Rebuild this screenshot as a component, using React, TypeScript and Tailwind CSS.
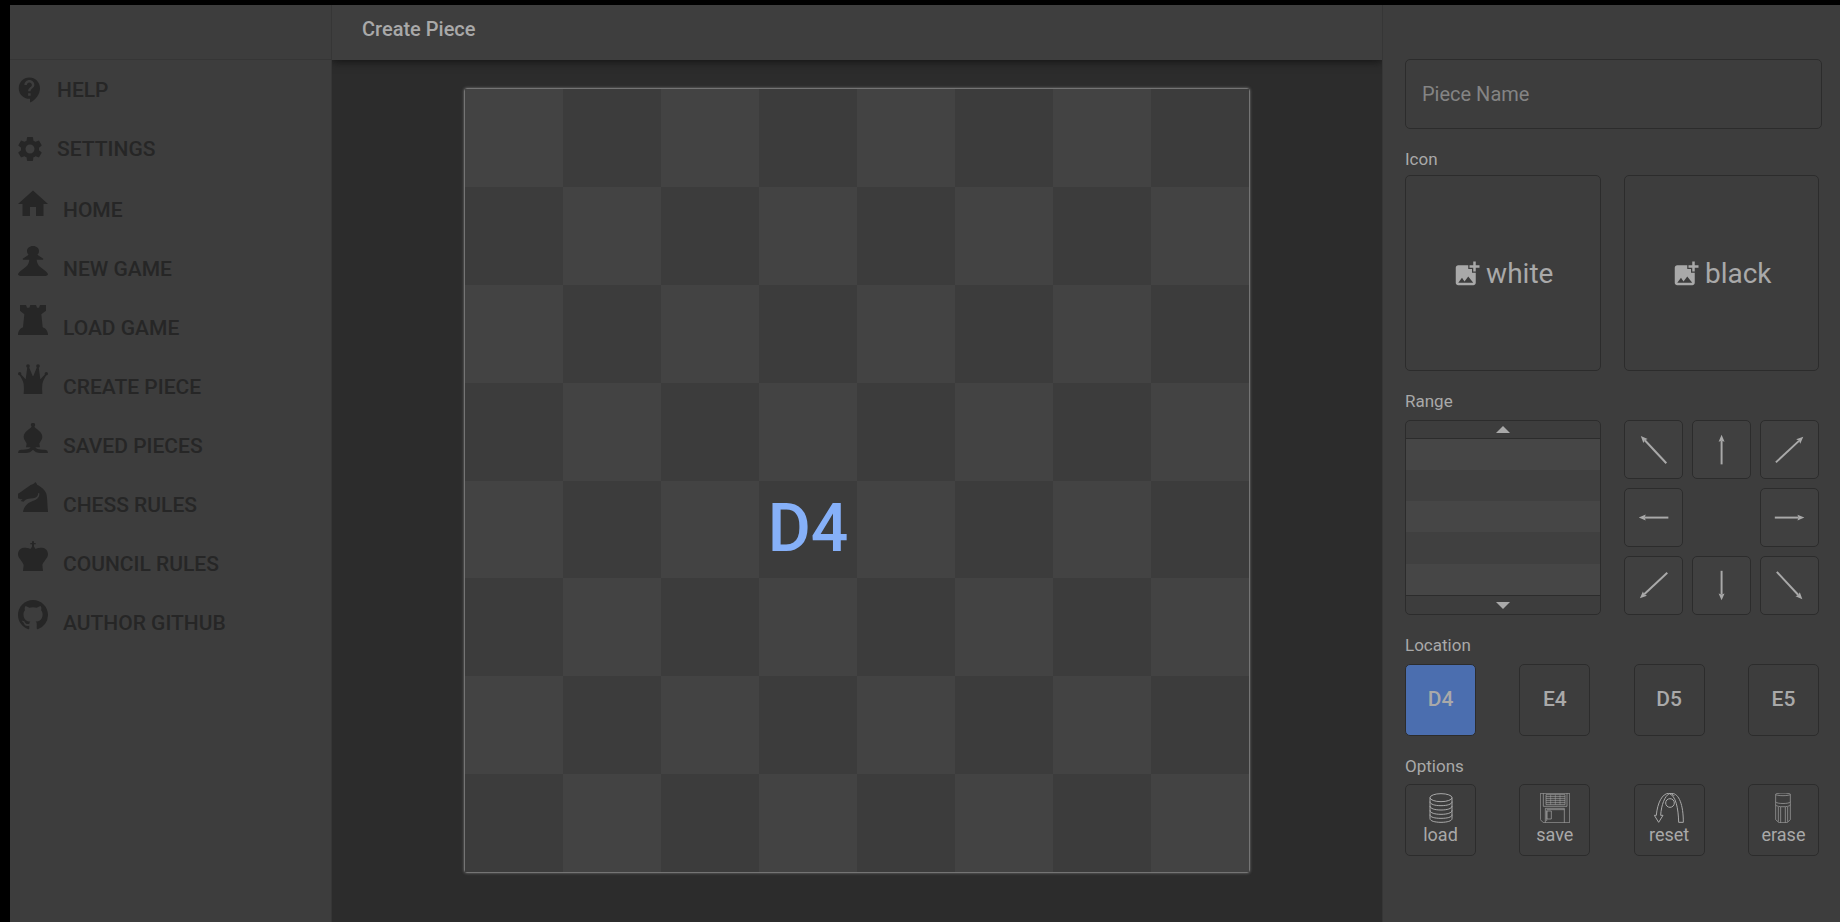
import React, { useState } from "react";
import { MdContactSupport, MdSettings, MdHome, MdAddPhotoAlternate } from "react-icons/md";

type IconProps = { children: React.ReactNode };

function PieceIcon({ children }: IconProps) {
  return (
    <svg viewBox="0 0 90 90" className="mb-1 size-[30px]" fill="currentColor" aria-hidden="true">
      {children}
    </svg>
  );
}

const pawn = (
  <PieceIcon>
    <path d="M45 0C56 0 63 7 63 15C63 20 61 24 58 26C64 29 70 34 76 38L75 41H56C57 50 60 57 66 62C74 70 86 75 90 84C90 88 87 89 82 90H8C3 89 0 88 0 84C4 75 16 70 24 62C30 57 33 50 34 41H15L14 38C20 34 26 29 32 26C29 24 27 20 27 15C27 7 34 0 45 0Z" />
  </PieceIcon>
);
const rook = (
  <PieceIcon>
    <path d="M6 0H24L27 8H34L37 0H54L57 8H63L66 0H84V17L70 28L74 67C83 70 90 78 90 90H0C0 78 7 70 15 67L19 28L6 17Z" />
  </PieceIcon>
);
const queen = (
  <PieceIcon>
    <circle cx="5" cy="29" r="5" />
    <circle cx="30" cy="6" r="5.500" />
    <circle cx="60" cy="6" r="5.500" />
    <circle cx="85" cy="29" r="5" />
    <path d="M3 31L8 30L23 46L28 9H33L44 36H46L57 9H62L67 46L82 30L87 31C80 42 75 50 73 60C72 70 72 80 73 90H17C18 80 18 70 17 60C15 50 10 42 3 31Z" />
  </PieceIcon>
);
const bishop = (
  <PieceIcon>
    <circle cx="45" cy="6" r="6.500" />
    <path d="M42 10H48C52 19 73 24 73 42C73 50 66 56 64 62L66 73H52C57 83 80 78 88 83L90 90H68C57 90 50 86 45 80C40 86 33 90 22 90H0L2 83C10 78 33 83 38 73H24L26 62C24 56 17 50 17 42C17 24 38 19 42 10Z" />
  </PieceIcon>
);
const knight = (
  <PieceIcon>
    <path d="M52 0C55 3 57 6 58 9C68 13 82 25 85 35C88 45 88 65 90 90H15C17 74 29 62 44 57C56 53 65 47 64 34L61 33C60 43 55 48 45 49C35 51 29 50 23 53L16 59L8 57L14 51L8 52L0 49L0 35C12 28 28 16 38 9C44 6 48 6 52 0Z" />
  </PieceIcon>
);
const king = (
  <PieceIcon>
    <path d="M43 0H47L48 6H53V10H48V17L53 24C58 20 66 20 73 20C84 22 90 30 90 40C90 52 75 62 73 72L75 90H15L17 72C15 62 0 52 0 40C0 30 6 22 17 20C24 20 32 20 37 24L42 17V10H37V6H42Z" />
  </PieceIcon>
);
const github = (
  <svg viewBox="0 0 16 16" className="mb-1 size-[30px]" fill="currentColor" aria-hidden="true">
    <path d="M8 0C3.58 0 0 3.58 0 8c0 3.54 2.29 6.53 5.47 7.59.4.07.55-.17.55-.38 0-.19-.01-.82-.01-1.49-2.01.37-2.53-.49-2.69-.94-.09-.23-.48-.94-.82-1.13-.28-.15-.68-.52-.01-.53.63-.01 1.08.58 1.23.82.72 1.21 1.87.87 2.33.66.07-.52.28-.87.51-1.07-1.78-.2-3.64-.89-3.64-3.95 0-.87.31-1.59.82-2.15-.08-.2-.36-1.02.08-2.12 0 0 .67-.21 2.2.82.64-.18 1.32-.27 2-.27s1.36.09 2 .27c1.53-1.04 2.2-.82 2.2-.82.44 1.1.16 1.92.08 2.12.51.56.82 1.27.82 2.15 0 3.07-1.87 3.75-3.65 3.95.29.25.54.73.54 1.48 0 1.07-.01 1.93-.01 2.2 0 .21.15.46.55.38A8.01 8.01 0 0 0 16 8c0-4.420-3.580-8-8-8Z" />
  </svg>
);

const utilityLinks = [
  { label: "HELP", icon: <MdContactSupport size={30} /> },
  { label: "SETTINGS", icon: <MdSettings size={30} /> },
];

const pageLinks = [
  { label: "HOME", icon: <MdHome size={36} /> },
  { label: "NEW GAME", icon: pawn },
  { label: "LOAD GAME", icon: rook },
  { label: "CREATE PIECE", icon: queen },
  { label: "SAVED PIECES", icon: bishop },
  { label: "CHESS RULES", icon: knight },
  { label: "COUNCIL RULES", icon: king },
  { label: "AUTHOR GITHUB", icon: github },
];

function Sidebar() {
  return (
    <aside className="flex w-[322px] shrink-0 flex-col border-r border-[#363636] text-[21px] font-medium text-[#262626]">
      <div className="h-[55px] shrink-0 border-b border-[#363636]" />
      <nav aria-label="Main">
        <ul className="mb-0.5">
          {utilityLinks.map(({ label, icon }) => (
            <li key={label}>
              <button type="button" className="flex h-[59px] w-full items-center gap-3 pl-[5px] text-left">
                {icon}
                <span className="pt-0.5">{label}</span>
              </button>
            </li>
          ))}
        </ul>
        <ul>
          {pageLinks.map(({ label, icon }) => (
            <li key={label}>
              <a href="#" className="flex h-[59px] items-center gap-3 pl-[5px]">
                <span className="mb-3 flex size-9 items-center justify-center">{icon}</span>
                <span className="pt-0.5">{label}</span>
              </a>
            </li>
          ))}
        </ul>
      </nav>
    </aside>
  );
}

const files = ["A", "B", "C", "D", "E", "F", "G", "H"];
const ranks = [8, 7, 6, 5, 4, 3, 2, 1];

function Board({ location }: { location: string }) {
  return (
    <div className="mx-auto mt-7 grid aspect-[786/785] w-[786px] grid-cols-8 grid-rows-8 rounded-[3px] border border-[#747474] shadow-[0_0_3px_#777777]">
      {ranks.map((rank, r) =>
        files.map((file, f) => (
          <div
            key={file + rank}
            className={`flex min-h-0 items-center justify-center text-[66px] leading-none font-medium text-[#86b0f8] ${
              (r + f) % 2 === 0 ? "bg-[#434343]" : "bg-[#3c3c3c]"
            }`}
          >
            {file + rank === location ? location : null}
          </div>
        )),
      )}
    </div>
  );
}

const box = "rounded-[5px] border border-[#2c2c2c]";

function Arrow({ angle, length }: { angle: number; length: number }) {
  const half = length / 2;
  return (
    <svg viewBox="-29 -29 58 58" className="size-full" aria-hidden="true">
      <g transform={`rotate(${angle})`} fill="#a9a9a9">
        <path d={`M-1 ${half}V${6 - half}H1V${half}Z`} />
        <path d={`M0 ${-half}L3 ${7 - half}L0 ${6 - half}L-3 ${7 - half}Z`} />
      </g>
    </svg>
  );
}

const directions: ({ name: string; angle: number; length: number } | null)[] = [
  { name: "Up left", angle: -43, length: 38 },
  { name: "Up", angle: 0, length: 30 },
  { name: "Up right", angle: 47, length: 38 },
  { name: "Left", angle: -90, length: 30 },
  null,
  { name: "Right", angle: 90, length: 30 },
  { name: "Down left", angle: -133, length: 38 },
  { name: "Down", angle: 180, length: 30 },
  { name: "Down right", angle: 137, length: 38 },
];

function OptionIcon({ children }: IconProps) {
  return (
    <svg viewBox="0 0 90 90" className="size-[30px]" fill="none" stroke="#a9a9a9" strokeWidth="3" aria-hidden="true">
      {children}
    </svg>
  );
}

const options = [
  {
    label: "load",
    icon: (
      <OptionIcon>
        <ellipse cx="45" cy="14" rx="33" ry="12" />
        <path d="M12 14V77C12 84 27 88 45 88S78 84 78 77V14M12 26C12 34 27 38 45 38S78 34 78 26M12 39C12 47 27 51 45 51S78 47 78 39M12 52C12 60 27 64 45 64S78 60 78 52M12 65C12 73 27 76 45 76S78 73 78 65" />
      </OptionIcon>
    ),
  },
  {
    label: "save",
    icon: (
      <OptionIcon>
        <g strokeWidth="2">
          <path d="M1 1H89V89H10L1 80ZM10 1V40H81V1M16 89V46H73V89M20 52V84M20 50H73" />
          <path d="M21 54H34V78H21Z" />
          <path d="M18 5H75V35H18ZM18 11H75M18 17H75M18 23H75M18 29H75" />
        </g>
        <path d="M32 5V35M46 5V35M60 5V35" strokeWidth="1.500" />
      </OptionIcon>
    ),
  },
  {
    label: "reset",
    icon: (
      <OptionIcon>
        <path d="M1 67H7C10 30 25 1 44 1H54C75 2 88 35 88 88H74C73 45 65 8 46 2C32 9 22 36 20 67H27L14 88Z" />
        <path d="M44 1C50 0 56 3 61 9" />
        <circle cx="48" cy="30" r="13" />
      </OptionIcon>
    ),
  },
  {
    label: "erase",
    icon: (
      <OptionIcon>
        <g strokeWidth="2">
          <ellipse cx="45" cy="4" rx="22" ry="4" />
          <path d="M23 4V80L33 89H57L67 80V4M23 27C27 33 63 33 67 27M23 36C27 43 63 43 67 36M31 42V86M38 42V89M52 42V89M59 42V86" />
        </g>
      </OptionIcon>
    ),
  },
];

const locations = ["D4", "E4", "D5", "E5"];

type EditorProps = { location: string; onLocation: (value: string) => void };

function PieceEditor({ location, onLocation }: EditorProps) {
  const heading = "mt-[18px] text-[17px] leading-6";
  return (
    <section
      aria-label="Piece editor"
      className="w-[458px] shrink-0 border-l border-[#363636] pt-[54px] pr-[18px] pl-[22px] text-[#a9a9a9]"
    >
      <input
        aria-label="Piece Name"
        placeholder="Piece Name"
        className="block h-[70px] w-full rounded-[5px] border border-[#2c2c2c] bg-transparent px-4 text-xl outline-none placeholder:text-[#848484]"
      />
      <div className="pr-[3px]">
        <h2 className={heading}>Icon</h2>
        <div className="mt-1 grid grid-cols-2 gap-x-[23px]">
          {["white", "black"].map((side) => (
            <button
              key={side}
              type="button"
              className={`${box} flex aspect-square items-center justify-center gap-1 pt-0.5 text-[28px]`}
            >
              <MdAddPhotoAlternate size={30} />
              {side}
            </button>
          ))}
        </div>

        <h2 className={heading}>Range</h2>
        <div className="mt-[7px] grid grid-cols-2 gap-x-[23px]">
          <div className={`${box} flex flex-col overflow-hidden`}>
            <button
              type="button"
              aria-label="Scroll up"
              className="flex h-[18px] items-center justify-center border-b border-[#2c2c2c]"
            >
              <svg viewBox="0 0 14 7" className="h-[7px] w-3.5" fill="currentColor" aria-hidden="true">
                <path d="M0 7L7 0L14 7Z" />
              </svg>
            </button>
            <div className="grid flex-1 grid-rows-5">
              <div className="bg-[#464646]" />
              <div className="bg-[#404040]" />
              <div className="bg-[#464646]" />
              <div className="bg-[#404040]" />
              <div className="bg-[#464646]" />
            </div>
            <button
              type="button"
              aria-label="Scroll down"
              className="flex h-[19px] items-center justify-center border-t border-[#2c2c2c]"
            >
              <svg viewBox="0 0 14 7" className="h-[7px] w-3.5" fill="currentColor" aria-hidden="true">
                <path d="M0 0L7 7L14 0Z" />
              </svg>
            </button>
          </div>
          <div className="grid grid-cols-3 gap-[9px]">
            {directions.map((direction, i) =>
              direction ? (
                <button
                  key={direction.name}
                  type="button"
                  aria-label={direction.name}
                  className={`${box} aspect-square bg-[#404040]`}
                >
                  <Arrow angle={direction.angle} length={direction.length} />
                </button>
              ) : (
                <span key={i} />
              ),
            )}
          </div>
        </div>

        <h2 className={heading}>Location</h2>
        <div className="mt-[7px] flex justify-between">
          {locations.map((name) => (
            <button
              key={name}
              type="button"
              aria-pressed={name === location}
              onClick={() => onLocation(name)}
              className={`${box} h-[72px] w-[71px] text-[21px] font-medium ${
                name === location ? "bg-[#4b6eaf]" : ""
              }`}
            >
              {name}
            </button>
          ))}
        </div>

        <h2 className={heading}>Options</h2>
        <div className="mt-1.5 flex justify-between">
          {options.map(({ label, icon }) => (
            <button
              key={label}
              type="button"
              className={`${box} flex h-[72px] w-[71px] flex-col items-center pt-2 text-lg leading-6`}
            >
              {icon}
              {label}
            </button>
          ))}
        </div>
      </div>
    </section>
  );
}

export default function App() {
  const [location, setLocation] = useState("D4");
  return (
    <div className="min-h-screen bg-black pt-[5px] pl-2.5 font-['Roboto',sans-serif]">
      <div className="flex min-h-[calc(100vh-5px)] bg-[#3d3d3d]">
        <Sidebar />
        <main className="min-w-0 flex-1 overflow-hidden bg-[#2c2c2c]">
          <header className="flex h-[55px] items-center bg-[#3e3e3e] px-[30px] pb-2 shadow-[0_2px_8px_#151515]">
            <h1 className="text-xl font-medium text-[#a9a9a9]">Create Piece</h1>
          </header>
          <Board location={location} />
        </main>
        <PieceEditor location={location} onLocation={setLocation} />
      </div>
    </div>
  );
}
